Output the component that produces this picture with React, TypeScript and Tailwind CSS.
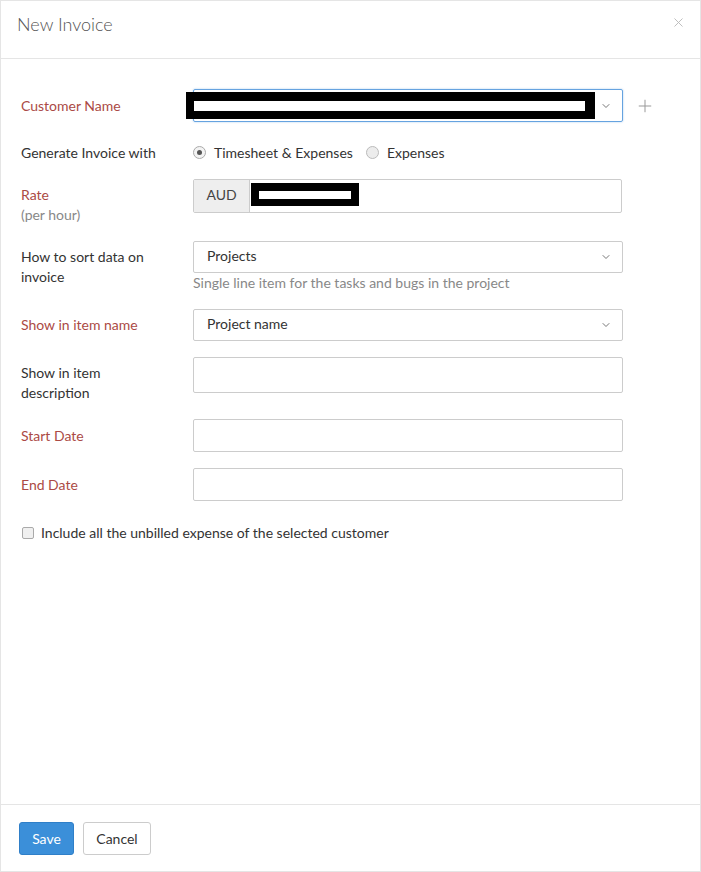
import { ChevronDown, Plus, X } from "lucide-react";

const labelCls = "w-[172px] shrink-0 text-[14px] leading-[20px]";
const req = "text-[#ab4a45]";
const plain = "text-[#333]";

function Redacted({ w, inner }: { w: number; inner: number }) {
  return (
    <div className="flex h-[27px] items-center bg-black px-[8px]" style={{ width: w }}>
      <div className="h-[10px] bg-white" style={{ width: inner }} />
    </div>
  );
}

function Select({ value }: { value: string }) {
  return (
    <div className="flex h-[32px] w-[430px] items-center justify-between rounded-[2px] border border-[#ccc] bg-white pl-[13px] pr-[10px] text-[14px] text-[#333]">
      <span className="-mt-[3px]">{value}</span>
      <ChevronDown size={12} strokeWidth={2} className="text-[#777]" />
    </div>
  );
}

function Field({ h = 33 }: { h?: number }) {
  return <div className="w-[430px] rounded-[2px] border border-[#ccc] bg-white" style={{ height: h }} />;
}

export default function App() {
  return (
    <div className="flex h-[872px] w-[701px] flex-col border border-[#e5e5e5] bg-white font-['Lato',sans-serif] text-[#333]">
      <div className="flex h-[58px] shrink-0 items-start justify-between border-b border-[#e5e5e5] pl-[16px] pr-[14px] pt-[10px]">
        <h1 className="text-[18px] font-light text-[#555]">New Invoice</h1>
        <X size={15} strokeWidth={1.5} className="mt-[4px] text-[#bbb]" />
      </div>

      <div className="flex-1 pl-[20px] pt-[30px]">
        <div className="flex items-center">
          <div className={`${labelCls} ${req}`}>Customer Name</div>
          <div className="relative flex h-[33px] w-[430px] items-center justify-between rounded-[2px] border border-[#66a3e0] shadow-[0_0_2px_rgba(102,163,224,0.6)] pr-[10px]">
            <div className="-ml-[8px]">
              <Redacted w={409} inner={391} />
            </div>
            <ChevronDown size={12} strokeWidth={2} className="text-[#777]" />
          </div>
          <Plus size={20} strokeWidth={1.2} className="ml-[12px] text-[#999]" />
        </div>

        <div className="mt-[20px] flex items-center">
          <div className={`${labelCls} ${plain}`}>Generate Invoice with</div>
          <label className="flex items-center gap-[8px] text-[14px]">
            <span className="flex h-[13px] w-[13px] items-center justify-center rounded-full border border-[#aaa] bg-[#f3f3f3]">
              <span className="h-[5px] w-[5px] rounded-full bg-[#555]" />
            </span>
            Timesheet &amp; Expenses
          </label>
          <label className="ml-[13px] flex items-center gap-[8px] text-[14px]">
            <span className="h-[13px] w-[13px] rounded-full border border-[#bbb] bg-[#ececec]" />
            Expenses
          </label>
        </div>

        <div className="mt-[16px] flex items-start">
          <div className={`${labelCls} pt-[6px]`}>
            <div className={req}>Rate</div>
            <div className="text-[#888]">(per hour)</div>
          </div>
          <div className="flex h-[34px] w-[429px] items-center rounded-[2px] border border-[#ccc]">
            <div className="flex h-full w-[56px] items-center justify-center border-r border-[#ccc] bg-[#eee] text-[14px] text-[#444]">
              <span className="-mt-[3px]">AUD</span>
            </div>
            <div className="ml-[1px] -mt-[3px]">
              <div className="flex h-[23px] w-[108px] items-center bg-black px-[8px]">
                <div className="h-[8px] w-[92px] bg-white" />
              </div>
            </div>
          </div>
        </div>

        <div className="mt-[16px] flex items-start">
          <div className={`${labelCls} ${plain} pt-[6px]`}>How to sort data on<br />invoice</div>
          <div>
            <Select value="Projects" />
            <div className="-mt-[1px] text-[14px] text-[#888]">Single line item for the tasks and bugs in the project</div>
          </div>
        </div>

        <div className="mt-[16px] flex items-center">
          <div className={`${labelCls} ${req}`}>Show in item name</div>
          <Select value="Project name" />
        </div>

        <div className="mt-[16px] flex items-start">
          <div className={`${labelCls} ${plain} pt-[6px]`}>Show in item<br />description</div>
          <Field h={36} />
        </div>

        <div className="mt-[16px] flex items-center">
          <div className={`${labelCls} ${req}`}>Start Date</div>
          <Field />
        </div>

        <div className="mt-[16px] flex items-center">
          <div className={`${labelCls} ${req}`}>End Date</div>
          <Field />
        </div>

        <label className="mt-[21px] flex items-center gap-[7px] text-[14px] text-[#333]">
          <span className="ml-[1px] h-[12px] w-[12px] rounded-[2px] border border-[#aaa] bg-[#f0f0f0]" />
          Include all the unbilled expense of the selected customer
        </label>
      </div>

      <div className="flex h-[67px] shrink-0 items-center gap-[9px] border-t border-[#e5e5e5] pl-[18px]">
        <button className="h-[33px] w-[55px] rounded-[3px] border border-[#2f7fc8] bg-[#3b8fd9] text-[14px] text-white">Save</button>
        <button className="h-[33px] w-[68px] rounded-[3px] border border-[#ccc] bg-white text-[14px] text-[#333]">Cancel</button>
      </div>
    </div>
  );
}
